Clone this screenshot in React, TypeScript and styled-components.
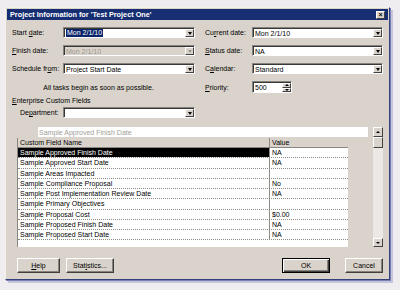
import React from 'react';
import styled, { createGlobalStyle, css } from 'styled-components';

const FACE = '#d9d3cb';
const DARK = '#404040';
const SHADOW = '#86827c';

const GlobalStyle = createGlobalStyle`
  html, body { margin: 0; padding: 0; background: #efedef; }
  body {
    width: 400px; height: 290px; overflow: hidden;
    font-family: "Liberation Sans", Arial, sans-serif;
    font-size: 7px; color: #000;
  }
  * { box-sizing: border-box; }
`;

const Page = styled.div`
  padding: 7px 0 0 5px;
`;

const Window = styled.div`
  width: 385px;
  height: 273px;
  background: ${FACE};
  border: 1px solid;
  border-color: #f4f0ea #34407a #34407a #f4f0ea;
  box-shadow: 1px 1px 0 #7880b4, 3px 3px 0 rgba(168, 172, 206, 0.6);
  padding: 1px;
  display: flex;
  flex-direction: column;
`;

const TitleBar = styled.div`
  height: 11px;
  background: #172f72;
  display: flex;
  align-items: center;
  justify-content: space-between;
  padding: 0 3px 0 3px;
`;

const Title = styled.span`
  color: #fff;
  font-weight: bold;
  font-size: 7.3px;
  white-space: nowrap;
`;

const CloseBtn = styled.span`
  width: 9px;
  height: 8px;
  background: ${FACE};
  border: 1px solid;
  border-color: #fff ${DARK} ${DARK} #fff;
  display: flex;
  align-items: center;
  justify-content: center;
  font-size: 7px;
  font-weight: bold;
  line-height: 1;
`;

const Content = styled.div`
  flex: 1;
  display: flex;
  flex-direction: column;
  padding: 7px 5px 5px 5px;
`;

const FormGrid = styled.div`
  display: grid;
  grid-template-columns: 51px 132px 10px 47px 131px;
  grid-template-rows: 11px 11px 11px 12px;
  row-gap: 7px;
`;

const Label = styled.span<{ $col?: number }>`
  display: block;
  align-self: center;
  line-height: 9px;
  white-space: nowrap;
  ${p => p.$col && css`grid-column: ${p.$col};`}
`;

const Combo = styled.div<{ $disabled?: boolean; $col?: number }>`
  display: flex;
  height: 100%;
  border: 1px solid;
  border-color: ${SHADOW} #fdfdfd #fdfdfd ${SHADOW};
  box-shadow: inset 1px 1px 0 #383838;
  background: ${p => (p.$disabled ? FACE : '#fff')};
  padding: 1px 0 0 1px;
  ${p => p.$col && css`grid-column: ${p.$col};`}
`;

const ComboText = styled.span<{ $disabled?: boolean }>`
  flex: 1;
  display: flex;
  align-items: center;
  padding-left: 1px;
  white-space: nowrap;
  overflow: hidden;
  color: ${p => (p.$disabled ? '#9c978f' : '#000')};
`;

const Selection = styled.span`
  background: #0a246a;
  color: #fff;
  padding: 0 1px;
  line-height: 8px;
`;

const DropBtn = styled.span<{ $disabled?: boolean }>`
  width: 9px;
  background: ${FACE};
  border: 1px solid;
  border-color: #fff ${DARK} ${DARK} #fff;
  display: flex;
  align-items: center;
  justify-content: center;
  &::after {
    content: '';
    border-left: 2.5px solid transparent;
    border-right: 2.5px solid transparent;
    border-top: 3px solid ${p => (p.$disabled ? '#9c978f' : '#000')};
  }
`;

const Note = styled.span`
  grid-column: 1 / 3;
  align-self: center;
  justify-self: center;
  line-height: 9px;
  padding-right: 10px;
  white-space: nowrap;
`;

const Spin = styled.div`
  grid-column: 5;
  width: 40px;
  display: flex;
  border: 1px solid;
  border-color: ${SHADOW} #fdfdfd #fdfdfd ${SHADOW};
  box-shadow: inset 1px 1px 0 #383838;
  background: #fff;
  padding: 1px 0 0 1px;
`;

const SpinButtons = styled.div`
  width: 9px;
  display: flex;
  flex-direction: column;
`;

const SpinBtn = styled.span<{ $up?: boolean }>`
  flex: 1;
  background: ${FACE};
  border: 1px solid;
  border-color: #fff ${DARK} ${DARK} #fff;
  display: flex;
  align-items: center;
  justify-content: center;
  &::after {
    content: '';
    border-left: 2px solid transparent;
    border-right: 2px solid transparent;
    ${p =>
      p.$up
        ? css`border-bottom: 2px solid #000;`
        : css`border-top: 2px solid #000;`}
  }
`;

const Section = styled.div`
  margin-top: 3px;
  height: 9px;
  line-height: 9px;
`;

const DeptRow = styled.div`
  margin-top: 2px;
  height: 11px;
  display: grid;
  grid-template-columns: 43px 132px;
  padding-left: 8px;
`;

const GridArea = styled.div`
  margin: 9px 0 0 5px;
  height: 120px;
  display: flex;
  gap: 3px;
`;

const GridBox = styled.div`
  width: 353px;
  display: flex;
  flex-direction: column;
  gap: 1px;
`;

const EditRow = styled.div`
  height: 10px;
  display: flex;
  padding-left: 21px;
  padding-right: 2px;
`;

const EditField = styled.span`
  flex: 1;
  background: #fff;
  color: #a29e98;
  display: flex;
  align-items: center;
  padding-left: 1px;
`;

const Table = styled.div`
  width: 331px;
  flex: 1;
  background: #fff;
  display: flex;
  flex-direction: column;
  border-left: 1px solid #8a8680;
`;

const Row = styled.div<{ $header?: boolean }>`
  display: grid;
  grid-template-columns: 251px 79px;
  height: ${p => (p.$header ? '10px' : '10.25px')};
  ${p =>
    p.$header
      ? css`border-bottom: 1px solid #8a8680;`
      : css`border-bottom: 1px dotted #8e8a86;`}
`;

const Cell = styled.span<{ $header?: boolean; $selected?: boolean; $value?: boolean }>`
  display: flex;
  align-items: center;
  padding-left: 2px;
  white-space: nowrap;
  overflow: hidden;
  ${p => p.$value && css`border-left: 1px solid #8e8a86;`}
  ${p => p.$header && css`background: ${FACE};`}
  ${p => p.$selected && css`background: #000; color: #fff;`}
`;

const ScrollBar = styled.div`
  width: 10px;
  display: flex;
  flex-direction: column;
`;

const ScrollBtn = styled.span<{ $h: number; $dir?: 'up' | 'down' }>`
  height: ${p => p.$h}px;
  background: ${FACE};
  border: 1px solid;
  border-color: #fff ${DARK} ${DARK} #fff;
  display: flex;
  align-items: center;
  justify-content: center;
  ${p =>
    p.$dir &&
    css`
      &::after {
        content: '';
        border-left: 2px solid transparent;
        border-right: 2px solid transparent;
        ${p.$dir === 'up'
          ? css`border-bottom: 2px solid #000;`
          : css`border-top: 2px solid #000;`}
      }
    `}
`;

const Track = styled.span`
  flex: 1;
  background: #ebe8e6;
`;

const ButtonRow = styled.div`
  margin-top: 11px;
  display: flex;
  align-items: center;
  padding-left: 5px;
`;

const PushButton = styled.button<{ $w: number; $default?: boolean; $gap?: number }>`
  width: ${p => p.$w}px;
  height: 15px;
  margin-left: ${p => p.$gap ?? 0}px;
  padding: 0;
  font-family: inherit;
  font-size: 7px;
  color: #000;
  background: ${FACE};
  border: 1px solid;
  ${p =>
    p.$default
      ? css`
          border-color: #000;
          box-shadow: inset 1px 1px 0 #fff, inset -1px -1px 0 ${DARK}, inset -2px -2px 0 ${SHADOW};
        `
      : css`
          border-color: #fff ${DARK} ${DARK} #fff;
          box-shadow: inset -1px -1px 0 ${SHADOW};
        `}
`;

const Spacer = styled.span`
  flex: 1;
`;

const rows: { name: string; value: string }[] = [
  { name: 'Sample Approved Finish Date', value: 'NA' },
  { name: 'Sample Approved Start Date', value: 'NA' },
  { name: 'Sample Areas Impacted', value: '' },
  { name: 'Sample Compliance Proposal', value: 'No' },
  { name: 'Sample Post Implementation Review Date', value: 'NA' },
  { name: 'Sample Primary Objectives', value: '' },
  { name: 'Sample Proposal Cost', value: '$0.00' },
  { name: 'Sample Proposed Finish Date', value: 'NA' },
  { name: 'Sample Proposed Start Date', value: 'NA' },
];

export default function App() {
  return (
    <>
      <GlobalStyle />
      <Page>
        <Window>
          <TitleBar>
            <Title>Project Information for 'Test Project One'</Title>
            <CloseBtn>×</CloseBtn>
          </TitleBar>
          <Content>
            <FormGrid>
              <Label>Start <u>d</u>ate:</Label>
              <Combo>
                <ComboText><Selection>Mon 2/1/10</Selection></ComboText>
                <DropBtn />
              </Combo>
              <Label $col={4}>Cu<u>r</u>rent date:</Label>
              <Combo $col={5}>
                <ComboText>Mon 2/1/10</ComboText>
                <DropBtn />
              </Combo>

              <Label><u>F</u>inish date:</Label>
              <Combo $disabled>
                <ComboText $disabled>Mon 2/1/10</ComboText>
                <DropBtn $disabled />
              </Combo>
              <Label $col={4}><u>S</u>tatus date:</Label>
              <Combo $col={5}>
                <ComboText>NA</ComboText>
                <DropBtn />
              </Combo>

              <Label>Schedule fr<u>o</u>m:</Label>
              <Combo>
                <ComboText>Project Start Date</ComboText>
                <DropBtn />
              </Combo>
              <Label $col={4}>C<u>a</u>lendar:</Label>
              <Combo $col={5}>
                <ComboText>Standard</ComboText>
                <DropBtn />
              </Combo>

              <Note>All tasks begin as soon as possible.</Note>
              <Label $col={4}><u>P</u>riority:</Label>
              <Spin>
                <ComboText>500</ComboText>
                <SpinButtons>
                  <SpinBtn $up />
                  <SpinBtn />
                </SpinButtons>
              </Spin>
            </FormGrid>

            <Section><u>E</u>nterprise Custom Fields</Section>
            <DeptRow>
              <Label>De<u>p</u>artment:</Label>
              <Combo>
                <ComboText />
                <DropBtn />
              </Combo>
            </DeptRow>

            <GridArea>
              <GridBox>
                <EditRow>
                  <EditField>Sample Approved Finish Date</EditField>
                </EditRow>
                <Table>
                  <Row $header>
                    <Cell $header>Custom Field Name</Cell>
                    <Cell $header $value>Value</Cell>
                  </Row>
                  {rows.map((r, i) => (
                    <Row key={r.name}>
                      <Cell $selected={i === 0}>{r.name}</Cell>
                      <Cell $value>{r.value}</Cell>
                    </Row>
                  ))}
                </Table>
              </GridBox>
              <ScrollBar>
                <ScrollBtn $h={10} $dir="up" />
                <ScrollBtn $h={11} />
                <Track />
                <ScrollBtn $h={9} $dir="down" />
              </ScrollBar>
            </GridArea>

            <ButtonRow>
              <PushButton $w={43}><u>H</u>elp</PushButton>
              <PushButton $w={48} $gap={6}>Stat<u>i</u>stics...</PushButton>
              <Spacer />
              <PushButton $w={48} $default>OK</PushButton>
              <PushButton $w={38} $gap={15}>Cancel</PushButton>
            </ButtonRow>
          </Content>
        </Window>
      </Page>
    </>
  );
}
